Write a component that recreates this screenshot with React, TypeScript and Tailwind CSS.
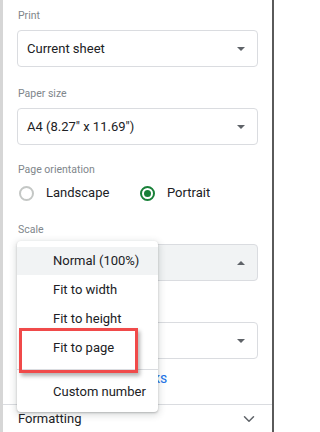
import { ChevronDown } from "lucide-react";

const font = { fontFamily: "Roboto, 'Liberation Sans', sans-serif" };

const Caret = ({ up = false }: { up?: boolean }) => (
  <svg width="8" height="4" viewBox="0 0 8 4" className="shrink-0">
    {up ? <path d="M0 4 L4 0 L8 4 Z" fill="#5f6368" /> : <path d="M0 0 L8 0 L4 4 Z" fill="#5f6368" />}
  </svg>
);

const Label = ({ children, className = "" }: { children: React.ReactNode; className?: string }) => (
  <div className={`h-[14px] pl-px text-[10.5px] leading-[14px] text-[#80868b] ${className}`}>{children}</div>
);

const Select = ({ value, open = false, className = "" }: { value?: string; open?: boolean; className?: string }) => (
  <div
    className={`flex h-[37px] items-center justify-between rounded-[4px] border border-[#dadce0] pl-[9px] pr-[12px] ${
      open ? "bg-[#f1f3f4]" : "bg-white"
    } ${className}`}
  >
    <span className="text-[13px] text-[#202124]">{value}</span>
    <Caret up={open} />
  </div>
);

const Radio = ({ checked, label }: { checked?: boolean; label: string }) => (
  <div className="flex items-center">
    <span
      className={`flex h-[15px] w-[15px] items-center justify-center rounded-full border-2 ${
        checked ? "border-[#188038]" : "border-[#c4c7c5]"
      }`}
    >
      {checked && <span className="h-[7px] w-[7px] rounded-full bg-[#188038]" />}
    </span>
    <span className="ml-[12px] text-[13px] text-[#202124]">{label}</span>
  </div>
);

const scaleOptions = ["Normal (100%)", "Fit to width", "Fit to height", "Fit to page"];

export default function App() {
  return (
    <div className="relative flex h-[432px] w-[277px] overflow-hidden bg-white" style={font}>
      {/* left gutter */}
      <div className="w-[3px] shrink-0 bg-[#d6d6d6]" />

      {/* settings panel */}
      <div className="flex w-[269px] shrink-0 flex-col">
        <div className="px-[14px]">
          <Label className="mt-[9px]">Print</Label>
          <Select value="Current sheet" className="mt-[7px]" />

          <Label className="mt-[20px]">Paper size</Label>
          <Select value={"A4 (8.27\" x 11.69\")"} className="mt-[7px]" />

          <Label className="mt-[18px]">Page orientation</Label>
          <div className="mt-[3px] flex h-[26px] items-center pl-[2px]">
            <div className="w-[121px]">
              <Radio label="Landscape" />
            </div>
            <Radio checked label="Portrait" />
          </div>

          <Label className="mt-[17px]">Scale</Label>
          <Select open className="mt-[7px]" />

          <Label className="mt-[20px]">Margins</Label>
          <Select className="mt-[7px]" />

          <div className="mt-[14px] h-[14px] pl-px text-[11px] font-medium leading-[14px] tracking-[0.4px] text-[#1a73e8]">
            SET CUSTOM PAGE BREAKS
          </div>
        </div>

        <div className="mt-auto border-t border-[#dadce0]">
          <div className="flex h-[27px] items-center justify-between pl-[15px] pr-[14px]">
            <span className="text-[13px] text-[#202124]">Formatting</span>
            <ChevronDown className="h-[18px] w-[18px] text-[#5f6368]" strokeWidth={2} />
          </div>
        </div>
      </div>

      {/* right edge */}
      <div className="w-[2px] shrink-0 bg-[#5a5a5a]" />
      <div className="flex-1 bg-white" />

      {/* open scale menu */}
      <div className="absolute left-[17px] top-[241px] w-[141px] rounded-[4px] bg-white py-[6px] shadow-[0_2px_6px_2px_rgba(60,64,67,0.15),0_1px_2px_0_rgba(60,64,67,0.3)]">
        {scaleOptions.map((opt, i) => (
          <div
            key={opt}
            className={`flex items-center pl-[36px] text-[13px] text-[#202124] ${
              i === 0 ? "h-[28px] bg-[#f1f3f4]" : "h-[29px]"
            }`}
          >
            {opt}
          </div>
        ))}
        <div className="my-[7px] h-px bg-[#dadce0]" />
        <div className="flex h-[29px] items-center pl-[36px] text-[13px] text-[#202124]">Custom number</div>
      </div>

      {/* highlight annotation */}
      <div className="absolute left-[19px] top-[328px] h-[45px] w-[119px] border-[3px] border-[#f04a4a] shadow-[2px_3px_4px_rgba(0,0,0,0.3)]" />
    </div>
  );
}
